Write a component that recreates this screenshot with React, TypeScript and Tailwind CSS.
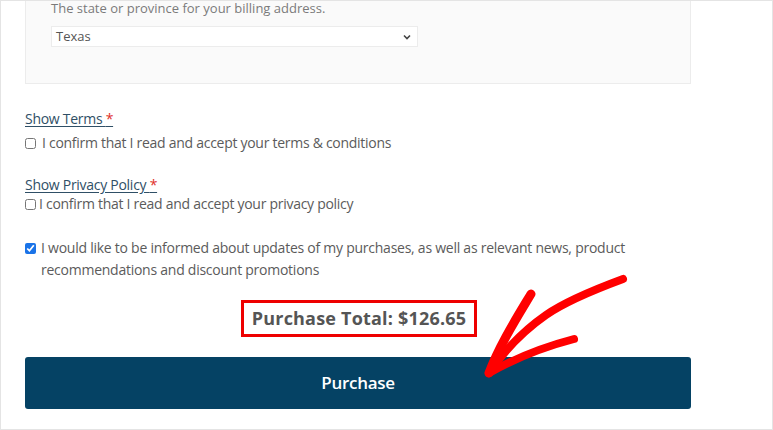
import React from "react";

export default function App() {
  const font = { fontFamily: '"Open Sans", "Liberation Sans", sans-serif' };
  return (
    <div
      className="relative w-[773px] h-[430px] overflow-hidden bg-white border border-[#e4e4e4] text-[#5b5b5b]"
      style={font}
    >
      <div className="ml-[24px] w-[666px] h-[83px] border-x border-b border-[#ececec] bg-[#fafafa] pl-[25px]">
        <p className="text-[13px] leading-[14px] text-[#7a7a7a]">
          The state or province for your billing address.
        </p>
        <div className="mt-[11px] w-[367px] h-[21px] bg-white border border-[#ececec] flex items-center justify-between pl-[4px] pr-[6px]">
          <span className="text-[13px] text-[#555]">Texas</span>
          <svg width="8" height="6" viewBox="0 0 8 6">
            <path d="M1 1.5 L4 4.5 L7 1.5" fill="none" stroke="#444" strokeWidth="1.6" />
          </svg>
        </div>
      </div>

      <div className="pl-[24px] text-[14px] tracking-[-0.28px]">
        <div className="mt-[26px] leading-[18px]">
          <a className="underline text-[#2f4f66] underline-offset-2">
            Show Terms <span className="text-[#e0302a]">*</span>
          </a>
        </div>
        <label className="mt-[5px] flex items-center gap-[6px] leading-[20px]">
          <input type="checkbox" className="w-[11px] h-[11px] m-0" readOnly />
          <span>I confirm that I read and accept your terms &amp; conditions</span>
        </label>

        <div className="mt-[23px] leading-[18px]">
          <a className="underline text-[#2f4f66] underline-offset-2">
            Show Privacy Policy <span className="text-[#e0302a]">*</span>
          </a>
        </div>
        <label className="mt-0 flex items-center gap-[3px] leading-[20px]">
          <input type="checkbox" className="w-[11px] h-[11px] m-0" readOnly />
          <span>I confirm that I read and accept your privacy policy</span>
        </label>

        <label className="mt-[23px] flex items-start gap-[5px] leading-[22px] w-[660px] tracking-[-0.25px]">
          <input
            type="checkbox"
            checked
            readOnly
            className="w-[11px] h-[11px] m-0 mt-[6px] accent-[#1a73e8] shrink-0"
          />
          <span>
            I would like to be informed about updates of my purchases, as well as relevant news, product
            recommendations and discount promotions
          </span>
        </label>
      </div>

      <div className="mt-[19px] flex justify-center w-[716px]">
        <div className="border-[3px] border-[#ee0000] px-[8px] h-[37px] flex items-center">
          <span className="text-[18px] font-bold text-[#555] tracking-[0.2px]">
            Purchase Total: $126.65
          </span>
        </div>
      </div>

      <div className="ml-[24px] mt-[20px] w-[666px] h-[52px] rounded-[3px] bg-[#054264] flex items-center justify-center">
        <span className="text-white text-[17px] font-semibold tracking-[-0.3px]">Purchase</span>
      </div>

      <svg
        className="absolute left-0 top-0 pointer-events-none"
        width="773"
        height="430"
        viewBox="0 0 773 430"
      >
        <g fill="none" stroke="#ff0000" strokeLinecap="round" strokeLinejoin="round">
          <path d="M622 278 C 595 288, 565 300, 545 314 C 522 330, 503 350, 488 372" strokeWidth="8" />
          <path d="M530 293 C 515 318, 498 345, 488 372" strokeWidth="9" />
          <path d="M573 338 C 550 344, 520 354, 488 372" strokeWidth="8" />
        </g>
      </svg>
    </div>
  );
}
